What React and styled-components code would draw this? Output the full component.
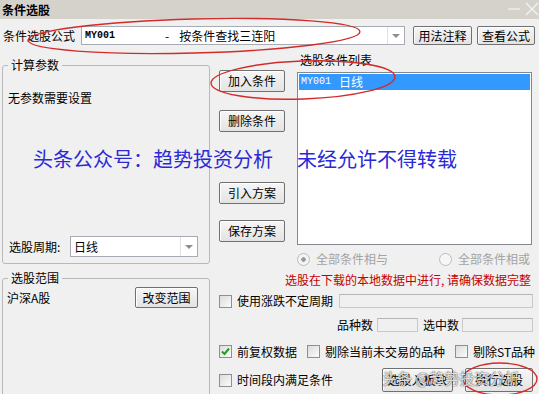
import React from "react";
import styled, { createGlobalStyle } from "styled-components";

const GlobalStyle = createGlobalStyle`
  html, body {
    margin: 0;
    padding: 0;
    background: #f0f0f0;
  }
  body {
    font-family: "Noto Sans CJK SC", "Liberation Sans", sans-serif;
    font-size: 12px;
    line-height: 14px;
    color: #000;
  }
  * { box-sizing: border-box; }
`;

const Window = styled.div`
  position: relative;
  width: 539px;
  height: 394px;
  overflow: hidden;
  background: #f0f0f0;
`;

const TitleBar = styled.div`
  height: 19px;
  background: #d5d2cb;
  display: flex;
  align-items: center;
  justify-content: space-between;
  padding-left: 2px;
`;
const Title = styled.span`
  font-weight: bold;
  font-size: 12px;
  line-height: 14px;
`;
const WinControls = styled.svg`
  width: 34px;
  height: 19px;
`;

const Content = styled.div`
  padding: 0 4px 0 2px;
`;

const FormulaRow = styled.div`
  display: flex;
  align-items: center;
  height: 19px;
  margin-top: 7px;
`;
const RowLabel = styled.span`
  width: ${({ $w }) => $w}px;
  padding-left: ${({ $pl }) => $pl || 0}px;
  flex: none;
  white-space: nowrap;
`;

const Combo = styled.div`
  display: flex;
  width: ${({ $w }) => $w}px;
  height: ${({ $h }) => $h}px;
  background: #fff;
  border: 1px solid #a7acb4;
  flex: none;
`;
const ComboText = styled.div`
  flex: 1;
  display: flex;
  align-items: center;
  padding-left: 3px;
  white-space: pre;
`;
const Mono = styled.span`
  font-family: "Liberation Mono", monospace;
  font-size: 10px;
  font-weight: ${({ $bold }) => ($bold ? "bold" : "normal")};
`;
const Dash = styled.span`
  margin-left: 50px;
  margin-right: 10px;
`;
const ComboArrow = styled.div`
  width: 17px;
  border-left: 1px solid #e2e2e2;
  display: flex;
  align-items: center;
  justify-content: center;
  &::after {
    content: "";
    border-left: 4px solid transparent;
    border-right: 4px solid transparent;
    border-top: 4px solid #8e8e8e;
  }
`;

const Button = styled.button`
  width: ${({ $w }) => $w}px;
  height: ${({ $h }) => $h || 22}px;
  margin: ${({ $m }) => $m || 0};
  padding: 0;
  flex: none;
  font: inherit;
  font-size: 12px;
  line-height: 14px;
  color: #000;
  background: linear-gradient(#f6f6f6, #e3e3e3);
  border: 1px solid #707070;
  border-radius: 2px;
  box-shadow: inset 1px 1px 0 #fff;
`;

const Main = styled.div`
  display: flex;
  gap: 9px;
  margin-top: 7px;
`;
const LeftCol = styled.div`
  width: 208px;
  flex: none;
`;
const Group = styled.fieldset`
  margin: ${({ $mt }) => $mt}px 0 0;
  height: ${({ $h }) => $h}px;
  padding: 0 11px 6px 4px;
  border: 1px solid #b9b9b9;
  border-radius: 3px;
  display: flex;
  flex-direction: column;
`;
const Legend = styled.legend`
  margin-left: 1px;
  padding: 0 3px;
  font-size: 12px;
  line-height: 14px;
`;
const Note = styled.div`
  margin-top: 19px;
  padding-left: 1px;
`;
const Spacer = styled.div`
  flex: 1;
`;
const FieldRow = styled.div`
  display: flex;
  align-items: center;
  justify-content: space-between;
  margin-top: ${({ $mt }) => $mt || 0}px;
  padding-left: ${({ $pl }) => $pl || 0}px;
`;

const RightCol = styled.div`
  width: 316px;
  flex: none;
  display: flex;
  flex-direction: column;
`;
const TopArea = styled.div`
  display: flex;
  gap: 12px;
`;
const ButtonCol = styled.div`
  width: 66px;
  display: flex;
  flex-direction: column;
  padding-top: 18px;
`;
const ListCol = styled.div`
  width: 235px;
`;
const ListLabel = styled.div`
  height: 20px;
  padding-left: 3px;
  line-height: 16px;
`;
const ListBox = styled.div`
  height: 173px;
  background: #fff;
  border: 1px solid #828790;
  padding: 1px;
`;
const SelectedRow = styled.div`
  height: 16px;
  display: flex;
  align-items: center;
  padding-left: 2px;
  background: #3399ff;
  color: #fff;
  white-space: pre;
`;

const Row = styled.div`
  display: flex;
  align-items: center;
  height: ${({ $h }) => $h}px;
  justify-content: ${({ $justify }) => $justify || "flex-start"};
  padding-left: ${({ $pl }) => $pl || 0}px;
  padding-right: ${({ $pr }) => $pr || 0}px;
  white-space: nowrap;
`;
const Radio = styled.span`
  display: inline-flex;
  align-items: center;
  gap: 6px;
  color: #a3a3a3;
  &::before {
    content: "";
    width: 11px;
    height: 11px;
    border-radius: 50%;
    border: 1px solid #bcbcbc;
    background: ${({ $on }) =>
      $on
        ? "radial-gradient(circle, #9a9a9a 0 2px, #f4f4f4 2.5px)"
        : "#f6f6f6"};
  }
`;
const Warning = styled.div`
  height: 14px;
  text-align: right;
  padding-right: 4px;
  color: #c40000;
  white-space: nowrap;
`;
const Check = styled.span`
  display: inline-flex;
  align-items: center;
  gap: 5px;
  margin-right: ${({ $mr }) => $mr || 0}px;
`;
const Box = styled.span`
  width: 13px;
  height: 13px;
  flex: none;
  border: 1px solid #8f8f8f;
  background: linear-gradient(135deg, #dcdcdc, #fbfbfb);
  display: flex;
  align-items: center;
  justify-content: center;
`;
const Field = styled.div`
  width: ${({ $w }) => $w}px;
  height: 14px;
  flex: none;
  margin-left: ${({ $ml }) => $ml || 0}px;
  border: 1px solid #c9c9c9;
  border-top-color: #b5b5b5;
  background: #f0f0f0;
`;
const FieldLabel = styled.span`
  margin-left: ${({ $ml }) => $ml || 0}px;
`;
const Push = styled.div`
  margin-left: auto;
`;

const Overlay = styled.svg`
  position: absolute;
  left: 0;
  top: 0;
  width: 539px;
  height: 394px;
  pointer-events: none;
`;
const Watermark = styled.div`
  position: absolute;
  left: 33px;
  top: 147px;
  display: flex;
  gap: 24px;
  font-size: 20px;
  line-height: 24px;
  color: #2a2ad6;
  white-space: nowrap;
`;
const Stamp = styled.div`
  position: absolute;
  left: 382px;
  top: 369px;
  font-size: 15px;
  line-height: 18px;
  color: rgba(255, 255, 255, 0.85);
  text-shadow: 0 0 1px rgba(0, 0, 0, 0.75), 0 0 2px rgba(0, 0, 0, 0.4);
  white-space: nowrap;
`;

function CheckBox({ checked, children, mr }) {
  return (
    <Check $mr={mr}>
      <Box>
        {checked && (
          <svg width="11" height="11" viewBox="0 0 11 11">
            <path d="M2 5.5 L4.5 8 L9 2.5" fill="none" stroke="#22a022" strokeWidth="2" />
          </svg>
        )}
      </Box>
      {children}
    </Check>
  );
}

export default function App() {
  return (
    <Window>
      <GlobalStyle />
      <TitleBar>
        <Title>条件选股</Title>
        <WinControls viewBox="0 0 34 19">
          <line x1="3" y1="9" x2="15" y2="9" stroke="#f4f4f4" strokeWidth="1.2" />
          <line x1="21" y1="3" x2="33" y2="15" stroke="#f4f4f4" strokeWidth="1.2" />
          <line x1="33" y1="3" x2="21" y2="15" stroke="#f4f4f4" strokeWidth="1.2" />
        </WinControls>
      </TitleBar>

      <Content>
        <FormulaRow>
          <RowLabel $w={79} $pl={1}>条件选股公式</RowLabel>
          <Combo $w={324} $h={19}>
            <ComboText>
              <Mono $bold>MY001</Mono>
              <Dash>-</Dash>
              按条件查找三连阳
            </ComboText>
            <ComboArrow />
          </Combo>
          <Button $w={59} $h={19} $m="0 0 0 8px">用法注释</Button>
          <Button $w={58} $h={19} $m="0 0 0 5px">查看公式</Button>
        </FormulaRow>

        <Main>
          <LeftCol>
            <Group $mt={6} $h={206}>
              <Legend>计算参数</Legend>
              <Note>无参数需要设置</Note>
              <Spacer />
              <FieldRow $pl={2}>
                <span>选股周期:</span>
                <Combo $w={128} $h={21}>
                  <ComboText>日线</ComboText>
                  <ComboArrow />
                </Combo>
              </FieldRow>
            </Group>
            <Group $mt={7} $h={140}>
              <Legend>选股范围</Legend>
              <FieldRow $mt={2}>
                <span>沪深A股</span>
                <Button $w={63} $h={21}>改变范围</Button>
              </FieldRow>
            </Group>
          </LeftCol>

          <RightCol>
            <TopArea>
              <ButtonCol>
                <Button $w={66}>加入条件</Button>
                <Button $w={66} $m="18px 0 0">删除条件</Button>
                <Button $w={66} $m="50px 0 0">引入方案</Button>
                <Button $w={66} $m="16px 0 0">保存方案</Button>
              </ButtonCol>
              <ListCol>
                <ListLabel>选股条件列表</ListLabel>
                <ListBox>
                  <SelectedRow>
                    <Mono>MY001</Mono>
                    {"   日线"}
                  </SelectedRow>
                </ListBox>
              </ListCol>
            </TopArea>

            <Row $h={28} $pl={78} $pr={5} $justify="space-between">
              <Radio $on>全部条件相与</Radio>
              <Radio>全部条件相或</Radio>
            </Row>
            <Warning>选股在下载的本地数据中进行, 请确保数据完整</Warning>

            <Row $h={28} $pr={2}>
              <CheckBox>使用涨跌不定周期</CheckBox>
              <Push />
              <Field $w={194} />
            </Row>
            <Row $h={20} $pr={2} $justify="flex-end">
              <FieldLabel>品种数</FieldLabel>
              <Field $w={41} $ml={4} />
              <FieldLabel $ml={5}>选中数</FieldLabel>
              <Field $w={71} $ml={3} />
            </Row>
            <Row $h={33}>
              <CheckBox checked mr={10}>前复权数据</CheckBox>
              <CheckBox mr={10}>剔除当前未交易的品种</CheckBox>
              <CheckBox>剔除ST品种</CheckBox>
            </Row>
            <Row $h={24} $pr={2}>
              <CheckBox>时间段内满足条件</CheckBox>
              <Push />
              <Button $w={71} $h={24}>选股入板块</Button>
              <Button $w={68} $h={24} $m="0 0 0 12px">执行选股</Button>
            </Row>
          </RightCol>
        </Main>
      </Content>

      <Watermark>
        <span>头条公众号：趋势投资分析</span>
        <span>未经允许不得转载</span>
      </Watermark>

      <Overlay viewBox="0 0 539 394">
        <g fill="none" stroke="#d42a2a" strokeWidth="1.4">
          <ellipse cx="194" cy="36" rx="166" ry="17" transform="rotate(-1.5 194 36)" />
          <ellipse cx="303" cy="80" rx="92" ry="19" transform="rotate(-2 303 80)" />
          <ellipse cx="500" cy="379" rx="37" ry="16" />
        </g>
      </Overlay>
      <Stamp>头条 @趋势投资分析</Stamp>
    </Window>
  );
}
